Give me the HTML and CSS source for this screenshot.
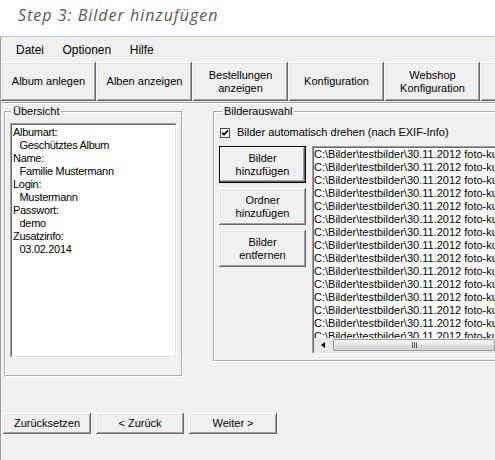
FILE: index.html
```html
<!DOCTYPE html>
<html lang="de">
<head>
<meta charset="utf-8">
<title>Step 3: Bilder hinzufügen</title>
<link rel="stylesheet" href="styles.css">
</head>
<body>
<div class="title">Step 3: Bilder hinzufügen</div>
<div class="window">
  <div class="menubar"><span>Datei</span><span>Optionen</span><span>Hilfe</span></div>
  <div class="toolbar">
    <button class="tbtn">Album anlegen</button>
    <button class="tbtn">Alben anzeigen</button>
    <button class="tbtn">Bestellungen<br>anzeigen</button>
    <button class="tbtn">Konfiguration</button>
    <button class="tbtn">Webshop<br>Konfiguration</button>
    <button class="tbtn">&nbsp;</button>
  </div>
  <div class="main">
    <fieldset class="group overview">
      <legend>Übersicht</legend>
      <div class="sunken info-box">
        <div class="sunken-in info">
          <div class="lbl">Albumart:</div>
          <div class="val">Geschütztes Album</div>
          <div class="lbl">Name:</div>
          <div class="val">Familie Mustermann</div>
          <div class="lbl">Login:</div>
          <div class="val">Mustermann</div>
          <div class="lbl">Passwort:</div>
          <div class="val">demo</div>
          <div class="lbl">Zusatzinfo:</div>
          <div class="val">03.02.2014</div>
        </div>
      </div>
    </fieldset>
    <fieldset class="group selection">
      <legend class="legend-wide">Bilderauswahl</legend>
      <div class="check">
        <svg class="box" width="10" height="10" viewBox="0 0 10 10">
          <rect x="0.5" y="0.5" width="9" height="9" fill="#fff" stroke="#4a4a4a"/>
          <polyline points="2,4.6 4,6.6 8,2.4" fill="none" stroke="#000" stroke-width="1.6"/>
        </svg>
        <span>Bilder automatisch drehen (nach EXIF-Info)</span>
      </div>
      <div class="sel-body">
        <div class="btncol">
          <button class="btn default">Bilder<br>hinzufügen</button>
          <button class="btn">Ordner<br>hinzufügen</button>
          <button class="btn">Bilder<br>entfernen</button>
        </div>
        <div class="sunken files-box">
          <div class="sunken-in files">
            <div class="rows">
              <div class="row">C:\Bilder\testbilder\30.11.2012 foto-kurs\IMG_0001.jpg</div>
              <div class="row">C:\Bilder\testbilder\30.11.2012 foto-kurs\IMG_0002.jpg</div>
              <div class="row">C:\Bilder\testbilder\30.11.2012 foto-kurs\IMG_0003.jpg</div>
              <div class="row">C:\Bilder\testbilder\30.11.2012 foto-kurs\IMG_0004.jpg</div>
              <div class="row">C:\Bilder\testbilder\30.11.2012 foto-kurs\IMG_0005.jpg</div>
              <div class="row">C:\Bilder\testbilder\30.11.2012 foto-kurs\IMG_0006.jpg</div>
              <div class="row">C:\Bilder\testbilder\30.11.2012 foto-kurs\IMG_0007.jpg</div>
              <div class="row">C:\Bilder\testbilder\30.11.2012 foto-kurs\IMG_0008.jpg</div>
              <div class="row">C:\Bilder\testbilder\30.11.2012 foto-kurs\IMG_0009.jpg</div>
              <div class="row">C:\Bilder\testbilder\30.11.2012 foto-kurs\IMG_0010.jpg</div>
              <div class="row">C:\Bilder\testbilder\30.11.2012 foto-kurs\IMG_0011.jpg</div>
              <div class="row">C:\Bilder\testbilder\30.11.2012 foto-kurs\IMG_0012.jpg</div>
              <div class="row">C:\Bilder\testbilder\30.11.2012 foto-kurs\IMG_0013.jpg</div>
              <div class="row">C:\Bilder\testbilder\30.11.2012 foto-kurs\IMG_0014.jpg</div>
              <div class="row">C:\Bilder\testbilder\30.11.2012 foto-kurs\IMG_0015.jpg</div>
            </div>
            <div class="hscroll">
              <span class="arrow"><span class="tri"></span></span>
              <span class="thumb"><span class="grip"></span></span>
            </div>
          </div>
        </div>
      </div>
    </fieldset>
  </div>
  <div class="footer">
    <button class="fbtn">Zurücksetzen</button>
    <button class="fbtn">&lt; Zurück</button>
    <button class="fbtn">Weiter &gt;</button>
  </div>
</div>
</body>
</html>
```
FILE: styles.css
```css
html, body {
  margin: 0;
  padding: 0;
}

body {
  width: 495px;
  height: 460px;
  overflow: hidden;
  background: #fff;
  display: flex;
  flex-direction: column;
  font-family: "Liberation Sans", Arial, sans-serif;
  font-size: 11px;
  color: #000;
}

.title {
  flex: 0 0 auto;
  height: 32px;
  padding: 4px 0 0 18px;
  font-family: "Open Sans", "DejaVu Sans", sans-serif;
  font-style: italic;
  font-size: 16px;
  line-height: 22px;
  letter-spacing: 1px;
  color: #585858;
}

.window {
  flex: 1 1 auto;
  min-height: 0;
  background: #f0f0f0;
  border-top: 1px solid #bccbdb;
  border-left: 1px solid #a0a0a0;
  overflow: hidden;
  display: flex;
  flex-direction: column;
}

.menubar {
  display: flex;
  gap: 18.5px;
  padding: 6px 0 4px 15px;
  font-size: 12px;
  line-height: 14px;
}

.toolbar {
  display: flex;
  gap: 1px;
  padding: 1px 0;
  border-bottom: 1px solid #a0a0a0;
  box-shadow: 0 1px 0 #fff;
}

button {
  font: inherit;
  color: inherit;
  border: 0;
  margin: 0;
  padding: 0;
  background: #f0f0f0;
  line-height: 13px;
  text-align: center;
  box-sizing: border-box;
  box-shadow: inset -1px -1px #696969, inset 1px 1px #fff, inset -2px -2px #a0a0a0, inset 2px 2px #e3e3e3;
}

.tbtn {
  flex: 0 0 95px;
  height: 39px;
}

.main {
  display: flex;
  align-items: flex-start;
  gap: 30px;
  padding: 2px 0 0 3px;
}

.group {
  margin: 0;
  border: 2px groove #fff;
  box-sizing: border-box;
  min-width: 0;
}

.group legend {
  padding: 0 2px;
  margin-left: 1px;
  line-height: 13px;
}

.group .legend-wide {
  margin-left: 3px;
}

.overview {
  flex: 0 0 179px;
  width: 179px;
  padding: 5px 4px 17px 4px;
}

.selection {
  flex: 0 0 400px;
  width: 400px;
  padding: 8px 4px 6px 4px;
}

.sunken {
  box-sizing: border-box;
  border: 1px solid;
  border-color: #a0a0a0 #fff #fff #a0a0a0;
}

.sunken-in {
  box-sizing: border-box;
  height: 100%;
  border: 1px solid;
  border-color: #696969 #e3e3e3 #e3e3e3 #696969;
  background: #fff;
}

.info-box {
  height: 235px;
}

.info {
  padding: 1px 0 0 1px;
  line-height: 13px;
  letter-spacing: -0.3px;
}

.info .val {
  padding-left: 6.5px;
}

.check {
  display: flex;
  align-items: center;
  height: 13px;
  line-height: 13px;
}

.check .box {
  margin: 0 7px 0 1px;
  flex: 0 0 auto;
}

.sel-body {
  display: flex;
  align-items: flex-start;
  gap: 6px;
  margin-top: 7px;
}

.btncol {
  flex: 0 0 87px;
  display: flex;
  flex-direction: column;
  gap: 5px;
}

.btn {
  height: 37px;
}

.btn.default {
  box-shadow: inset 0 0 0 1px #000, inset -2px -2px #696969, inset 2px 2px #fff, inset -3px -3px #a0a0a0;
}

.files-box {
  flex: 0 0 300px;
  height: 208px;
}

.files {
  display: flex;
  flex-direction: column;
}

.rows {
  flex: 1 1 auto;
  min-height: 0;
  overflow: hidden;
  line-height: 13px;
  white-space: nowrap;
}

.hscroll {
  flex: 0 0 14px;
  display: flex;
  align-items: center;
  background: #e9e9e9;
}

.arrow {
  flex: 0 0 17px;
  height: 14px;
  display: flex;
  align-items: center;
  justify-content: center;
}

.tri {
  width: 0;
  height: 0;
  border-right: 4px solid #000;
  border-top: 3.5px solid transparent;
  border-bottom: 3.5px solid transparent;
}

.thumb {
  flex: 0 0 162px;
  margin-left: 2px;
  height: 12px;
  box-sizing: border-box;
  border: 1px solid #9a9a9a;
  border-radius: 2px;
  background: linear-gradient(#f6f6f6, #e9e9e9 50%, #dcdcdc 51%, #d6d6d6);
  display: flex;
  align-items: center;
  justify-content: center;
}

.grip {
  width: 5px;
  height: 6px;
  background: repeating-linear-gradient(90deg, #5a5a5a 0 1px, transparent 1px 2px);
}

.footer {
  display: flex;
  gap: 5px;
  padding: 36px 0 0 2px;
}

.fbtn {
  flex: 0 0 88px;
  height: 21px;
}
```
